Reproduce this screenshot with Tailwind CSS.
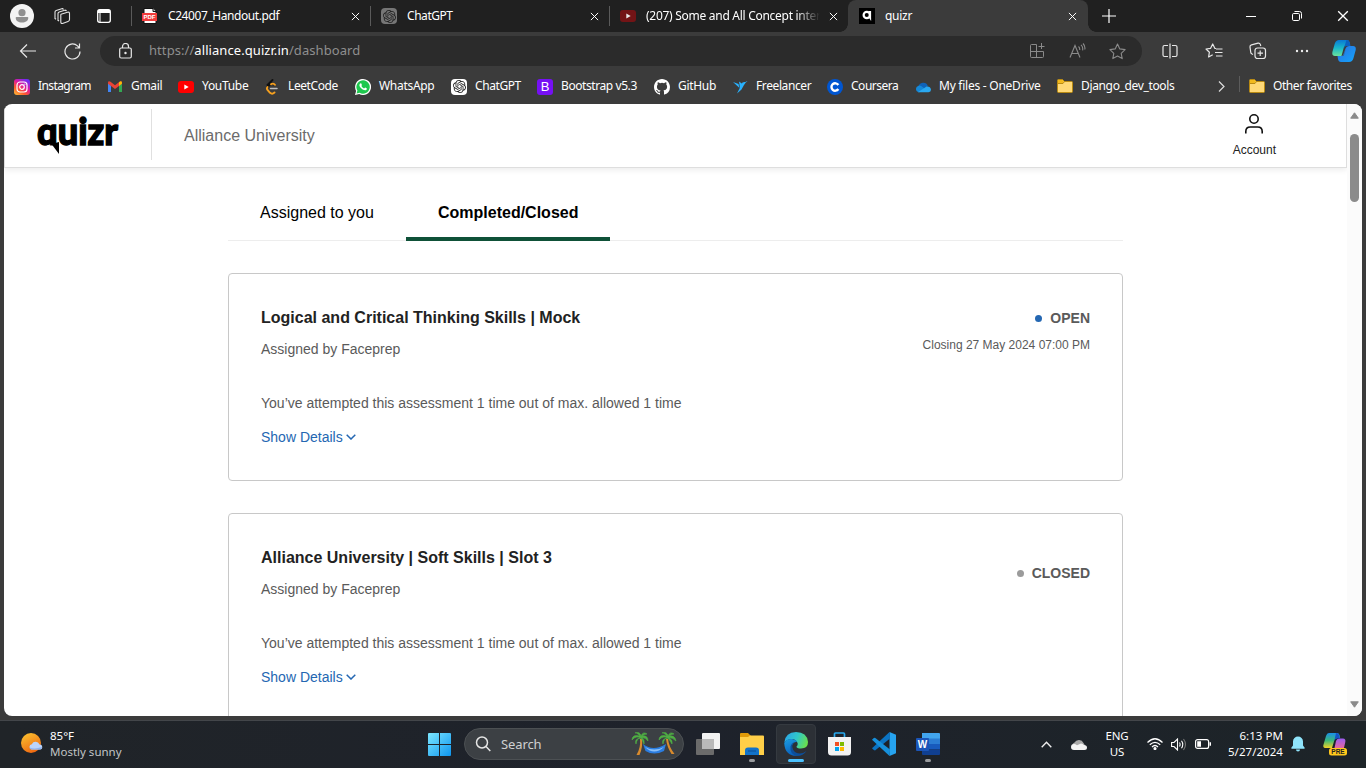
<!DOCTYPE html>
<html lang="en">
<head>
<meta charset="utf-8">
<title>quizr</title>
<script src="https://cdn.jsdelivr.net/npm/@tailwindcss/browser@4"></script>
</head>
<body class="w-[1366px] h-[768px] overflow-hidden bg-[#3b3b3b] flex flex-col font-['Noto_Sans','Open_Sans',sans-serif] text-white">
<svg class="hidden">
  <symbol id="x" viewBox="0 0 10 10"><path d="M1 1l8 8M9 1l-8 8" fill="none" stroke="currentColor" stroke-width="1.1"/></symbol>
  <symbol id="folder" viewBox="0 0 16 16"><path d="M.5 2.5Q.5 1.5 1.5 1.5H5.5L7.5 3.5H14.500Q15.500 3.500 15.500 4.500V13.500Q15.500 14.500 14.500 14.500H1.500Q.5 14.500 .5 13.500Z" fill="#ffd977" stroke="#b98a12"/><path d="M1 2h4.500l1.500 1.700-1.500 1.800H1z" fill="#f2b91d"/><path d="M1 5.500H6L7.500 3.500" fill="none" stroke="#b98a12"/></symbol>
  <symbol id="knot" viewBox="0 0 24 24"><path fill="currentColor" d="M22.282 9.821a5.985 5.985 0 0 0-.516-4.910 6.046 6.046 0 0 0-6.510-2.900A6.065 6.065 0 0 0 4.981 4.182a5.985 5.985 0 0 0-3.998 2.900 6.046 6.046 0 0 0 .743 7.097 5.980 5.980 0 0 0 .510 4.911 6.051 6.051 0 0 0 6.515 2.900A5.985 5.985 0 0 0 13.260 24a6.056 6.056 0 0 0 5.772-4.206 5.990 5.990 0 0 0 3.998-2.900 6.056 6.056 0 0 0-.747-7.073zM13.260 22.430a4.476 4.476 0 0 1-2.876-1.041l.141-.081 4.779-2.758a.795.795 0 0 0 .392-.681v-6.737l2.020 1.169a.071.071 0 0 1 .038.052v5.583a4.504 4.504 0 0 1-4.494 4.494zM3.600 18.304a4.471 4.471 0 0 1-.535-3.014l.142.085 4.783 2.759a.771.771 0 0 0 .781 0l5.843-3.369v2.332a.080.080 0 0 1-.033.062L9.740 19.950a4.499 4.499 0 0 1-6.140-1.646zM2.341 7.896a4.485 4.485 0 0 1 2.366-1.973V11.600a.766.766 0 0 0 .388.677l5.815 3.354-2.020 1.169a.076.076 0 0 1-.071 0l-4.830-2.787A4.504 4.504 0 0 1 2.340 7.872zm16.597 3.855l-5.833-3.387L15.119 7.200a.076.076 0 0 1 .071 0l4.830 2.791a4.494 4.494 0 0 1-.676 8.105v-5.678a.790.790 0 0 0-.407-.667zm2.010-3.023l-.141-.085-4.774-2.782a.776.776 0 0 0-.785 0L9.409 9.230V6.897a.066.066 0 0 1 .028-.061l4.830-2.787a4.499 4.499 0 0 1 6.680 4.660zm-12.640 4.135l-2.020-1.164a.080.080 0 0 1-.038-.057V6.075a4.499 4.499 0 0 1 7.375-3.453l-.142.080L8.704 5.460a.795.795 0 0 0-.393.681zm1.097-2.365l2.602-1.500 2.607 1.500v2.999l-2.597 1.500-2.607-1.500z"/></symbol>
  <symbol id="yt" viewBox="0 0 16 12"><rect width="16" height="12" rx="3" fill="currentColor"/><path d="M6.300 3.500l4.400 2.500-4.400 2.500z" fill="#fff"/></symbol>
</svg>

<!-- tab strip -->
<div class="h-8 shrink-0 bg-[#202020] flex items-center text-[12px] tracking-[-0.28px]">
  <div class="w-[131px] flex items-center pl-[10px]">
    <svg class="size-6" viewBox="0 0 24 24"><circle cx="12" cy="12" r="12" fill="#f3f3f3"/><circle cx="12" cy="8.700" r="3.600" fill="#8f8f8f"/><path d="M6.500 13h11a.8.8 0 0 1 .8.800c0 3.200-2.700 4.700-6.300 4.700s-6.300-1.500-6.300-4.700a.8.800 0 0 1 .8-.8z" fill="#8f8f8f"/></svg>
    <svg class="size-[18px] ml-[19px]" viewBox="0 0 18 18" fill="none" stroke="#e4e4e4" stroke-width="1.100" stroke-linejoin="round"><path d="M8 7.200L14.500 5.200Q16.500 4.800 16.500 6.500V12.500Q16.500 14 15 14.500L9.500 16.500Q7.800 16.800 7.800 15V8zM5 14V6.500Q5 5.300 6.200 4.900L12.500 2.900M2 12V5Q2 3.800 3.200 3.400L9.500 1.400M5 13.200l1 .8M2 11.500l1 .8M12.500 3l1 1M9.500 1.500l1 1"/></svg>
    <svg class="size-4 ml-[25px]" viewBox="0 0 16 16"><rect x="1.700" y="1.700" width="12.600" height="12.600" rx="2" fill="none" stroke="#fff" stroke-width="1.300"/><path d="M2 2h12v3H4.500V14H3.500V5H2z" fill="#fff"/></svg>
  </div>
  <i class="w-px h-5 bg-[#5a5a5a]"></i>
  <div class="w-[238px] flex items-center pl-[10px] pr-[10px]">
    <svg class="size-4" viewBox="0 0 16 16"><path d="M2 .5h9l3 3V15.500H2z" fill="#fff" stroke="#111"/><path d="M11 .5v3h3" fill="#ccc" stroke="#111"/><rect y="5" width="15" height="8" fill="#f23b3b"/><text x="7.500" y="11.300" font-size="6" font-weight="800" fill="#fff" text-anchor="middle" letter-spacing="0" font-family="Liberation Sans">PDF</text></svg>
    <span class="ml-[10px] flex-1 whitespace-nowrap tracking-[-0.42px]">C24007_Handout.pdf</span><svg class="size-[9px]"><use href="#x"/></svg>
  </div>
  <i class="w-px h-5 bg-[#5a5a5a]"></i>
  <div class="w-[238px] flex items-center pl-[10px] pr-[10px]">
    <span class="size-4 rounded-sm bg-[#767676] text-[#222] flex items-center justify-center"><svg class="size-[13px]"><use href="#knot"/></svg></span>
    <span class="ml-[10px] flex-1 tracking-[-0.45px]">ChatGPT</span><svg class="size-[9px]"><use href="#x"/></svg>
  </div>
  <i class="w-px h-5 bg-[#5a5a5a]"></i>
  <div class="w-[238px] flex items-center pl-[10px] pr-[9px]">
    <svg class="w-4 h-3 text-[#7d1315] shrink-0 opacity-90"><use href="#yt"/></svg>
    <span class="ml-[10px] w-[174px] mr-[9px] overflow-hidden whitespace-nowrap [mask-image:linear-gradient(to_right,#000_86%,transparent)]">(207) Some and All Concept inter</span><svg class="size-[9px] shrink-0"><use href="#x"/></svg>
  </div>
  <div class="w-[240px] h-8 bg-[#3b3b3b] rounded-t-lg flex items-center pl-[11px] pr-[11px] relative">
    <i class="absolute -left-2 bottom-0 size-2 bg-[radial-gradient(circle_at_0_0,#202020_7.500px,#3b3b3b_8px)]"></i>
    <i class="absolute -right-2 bottom-0 size-2 bg-[radial-gradient(circle_at_100%_0,#202020_7.500px,#3b3b3b_8px)]"></i>
    <svg class="size-4" viewBox="0 0 16 16"><rect width="16" height="16" fill="#000"/><circle cx="7.800" cy="7" r="3.200" fill="none" stroke="#fff" stroke-width="2.200"/><path d="M9.800 3h2.300v10l-2.300-3.500z" fill="#fff"/></svg>
    <span class="ml-[10px] flex-1">quizr</span><svg class="size-[9px]"><use href="#x"/></svg>
  </div>
  <svg class="size-[14px] ml-[14px]" viewBox="0 0 14 14"><path d="M7 0v14M0 7h14" stroke="#fff" stroke-width="1.200"/></svg>
  <svg class="w-[10px] h-[10px] ml-[130px]" viewBox="0 0 10 10"><path d="M0 5.500h10" stroke="#fff"/></svg>
  <svg class="size-[10px] ml-[36px]" viewBox="0 0 10 10" fill="none" stroke="#fff"><rect x=".5" y="2.500" width="7" height="7" rx="1.200"/><path d="M2.500 .5H7.500a2 2 0 0 1 2 2v5"/></svg>
  <svg class="size-[12px] ml-[35px]"><use href="#x"/></svg>
</div>

<!-- toolbar -->
<div class="h-[38px] shrink-0 flex items-center text-[#e8e8e8]">
  <svg class="w-[17px] h-[14px] ml-[19px]" viewBox="0 0 17 14" fill="none" stroke="currentColor" stroke-width="1.200"><path d="M17 7H1.500M8 .5L1.500 7 8 13.500"/></svg>
  <svg class="size-[17px] ml-[28px]" viewBox="0 0 17 17" fill="none" stroke="currentColor" stroke-width="1.200"><path d="M16 8.500a7.500 7.500 0 1 1-2.500-5.600L15.500 5M15.500 .5V5H11"/></svg>
  <div class="ml-[19px] w-[1042px] h-[30px] rounded-full bg-[#2b2b2b] flex items-center pl-[19px] pr-4">
    <svg class="w-[13px] h-4" viewBox="0 0 13 16" fill="none" stroke="#e8e8e8" stroke-width="1.200"><rect x=".7" y="5" width="11.600" height="10" rx="1.500"/><path d="M3.500 5V3.500a3 3 0 0 1 6 0V5"/><circle cx="6.500" cy="10" r=".6" fill="#fff"/></svg>
    <span class="ml-[17px] flex-1 text-[13px] text-[#8f8f8f] tracking-[0.07px]">https://<span class="text-white">alliance.quizr.in</span>/dashboard</span>
    <svg class="size-4" viewBox="0 0 16 16" fill="none" stroke="#8a8a8a"><path d="M7.500 1.500H2.500a1 1 0 0 0-1 1V13.500a1 1 0 0 0 1 1H13.500a1 1 0 0 0 1-1V8.500M1.500 8.500h13M7.500 1.500v13M12.500 0v6M9.500 3.500h6"/></svg>
    <svg class="w-[17px] h-4 ml-6" viewBox="0 0 17 16" fill="none" stroke="#8a8a8a" stroke-width="1.100"><path d="M1 14.500L6 2.500l5 12M2.800 10.500h6.400M9.500 3.500q1.500 1.200 1.200 3.500M12 1.800q2.300 2 1.600 5.500M14 .5q2.500 2.500 1.800 6"/></svg>
    <svg class="size-[17px] ml-[23px]" viewBox="0 0 17 17" fill="none" stroke="#8a8a8a" stroke-width="1.100" stroke-linejoin="round"><path d="M8.500 1l2.300 4.900 5.300.7-3.900 3.700 1 5.300-4.700-2.600-4.700 2.600 1-5.300L.9 6.600l5.300-.7z"/></svg>
  </div>
  <svg class="size-4 ml-[20px]" viewBox="0 0 16 16" fill="none" stroke="currentColor" stroke-width="1.200"><path d="M6 2.500H2.500a1.500 1.500 0 0 0-1.500 1.500v8a1.500 1.500 0 0 0 1.500 1.500H6M10 2.500h3.500a1.500 1.500 0 0 1 1.500 1.500v8a1.500 1.500 0 0 1-1.500 1.500H10M8 .5v15"/></svg>
  <svg class="w-[18px] h-4 ml-[27px]" viewBox="0 0 18 16" fill="none" stroke="currentColor" stroke-width="1.200" stroke-linejoin="round"><path d="M11 5.500L9.800 5.300 7.700 1 5.600 5.300 1 6l3.400 3.200-.8 4.800 4.100-2.300M11 6h6.500M10 9.500h7.500M11 13h6.500"/></svg>
  <svg class="size-[18px] ml-[26px]" viewBox="0 0 18 18" fill="none" stroke="currentColor" stroke-width="1.200"><rect x="6" y="6" width="10.500" height="10.500" rx="2.500"/><path d="M11.200 8.500v5.500M8.500 11.200h5.500M4 12.500L3 12a2 2 0 0 1-1.300-2L1 5a2 2 0 0 1 1.500-2.200L9 1.200a2 2 0 0 1 2.300 1.200l.5 1.600"/></svg>
  <svg class="w-[14px] h-1 ml-[28px]" viewBox="0 0 14 4" fill="#eee"><circle cx="2" cy="2" r="1.200"/><circle cx="7" cy="2" r="1.200"/><circle cx="12" cy="2" r="1.200"/></svg>
  <svg class="w-6 h-[22px] ml-[23px]" viewBox="0 0 24 22"><defs><linearGradient id="ca" x1="0" y1="0" x2="0" y2="1"><stop stop-color="#0a78d4"/><stop offset=".5" stop-color="#19b7c9"/><stop offset="1" stop-color="#6be39c"/></linearGradient><linearGradient id="cb" x1="0" y1="0" x2="1" y2="1"><stop stop-color="#2d6fe0"/><stop offset="1" stop-color="#12a5fb"/></linearGradient></defs><path d="M7 0h8q2 0 2.500 2l.7 3H15q-2.500 0-3.200 2.500L9.500 16H3Q-.3 16 .4 12L2.800 3.500Q4 0 7 0z" fill="url(#ca)"/><path d="M17 6h4q3.300 0 2.700 4L21.500 18Q20.500 22 17 22H9q-2.500 0-3-3l-.5-3H9q2 0 2.700-2.500L13.500 8.500Q14.200 6 17 6z" fill="url(#cb)"/><path d="M14.500 0q2.500 0 3 2l1 4h-4q-2 0-2.600 2.500L11 11z" fill="#0b5fc0"/><path d="M14 8.500L11.800 16H5.500H9q2 0 2.700-2.500z" fill="#3b3b3b" opacity=".4"/></svg>
</div>

<!-- favorites bar -->
<div class="h-[34px] shrink-0 flex items-center pl-[14px] pb-[2px] text-[12px] leading-4 tracking-[-0.3px] whitespace-nowrap">
  <div class="w-[93px] flex items-center gap-2 shrink-0 tracking-[-0.6px]"><svg class="size-4 shrink-0 mt-px" viewBox="0 0 16 16"><defs><linearGradient id="ig" x1="0" y1="1" x2=".7" y2="0"><stop stop-color="#ffc83a"/><stop offset=".35" stop-color="#ff5a2c"/><stop offset=".65" stop-color="#e0199e"/><stop offset="1" stop-color="#6f2cf5"/></linearGradient></defs><rect width="16" height="16" rx="3" fill="url(#ig)"/><rect x="3" y="3" width="10" height="10" rx="3" fill="none" stroke="#fff" stroke-width="1.200"/><circle cx="8" cy="8" r="2.300" fill="none" stroke="#fff" stroke-width="1.200"/><circle cx="10.900" cy="5.100" r=".7" fill="#fff"/></svg>Instagram</div>
  <div class="w-[71px] flex items-center gap-2 shrink-0"><svg class="size-4 shrink-0 mt-px" viewBox="0 0 16 16"><path d="M1 4v9h3V6.500z" fill="#4285f4"/><path d="M12 6.500V13h3V4z" fill="#34a853"/><path d="M1 3.800Q1.200 1.500 3.500 2.800L8 6.300l4.500-3.500Q14.800 1.500 15 3.800v1L8 10 1 4.800z" fill="#ea4335"/><path d="M12 3.200Q15 1 15 4.500L12 7z" fill="#fbbc04"/></svg>Gmail</div>
  <div class="w-[86px] flex items-center gap-2 shrink-0"><svg class="w-4 h-3 shrink-0 text-[#f00] mt-px"><use href="#yt"/></svg>YouTube</div>
  <div class="w-[91px] flex items-center gap-2 shrink-0 tracking-[-0.4px]"><svg class="size-4 shrink-0 mt-px" viewBox="0 0 16 16" fill="none" stroke-width="1.900" stroke-linecap="round"><path d="M8.500 1L3.500 6" stroke="#111"/><path d="M10.500 5.800Q8.500 3.800 6.500 5L3.500 8" stroke="#111"/><path d="M11 5.800Q9 3.800 7 5.200" stroke="#f5a01f"/><path d="M3.500 8Q2.300 9.500 3.500 11L6 13.800Q8.200 15.700 10.500 13.500" stroke="#f5a01f"/><path d="M6.500 9.500h6.500" stroke="#bdbdbd" stroke-width="1.500"/></svg>LeetCode</div>
  <div class="w-[96px] flex items-center gap-2 shrink-0"><svg class="size-4 shrink-0 mt-px" viewBox="0 0 16 16"><path d="M0 16l1.100-4.100A8 8 0 1 1 4.200 15z" fill="#fff"/><path d="M1.600 14.400l.8-2.800a6.700 6.700 0 1 1 2.300 2.200z" fill="#1ec84e"/><path d="M5.800 4.200c.3 0 .4.100.6.500l.5 1.200c.1.300-.6.900-.5 1.200.7 1.200 1.500 1.800 2.700 2.300.3.100.8-.9 1.100-.8l1.400.7c.5.300.1 1.500-.5 1.800-2.300 1.100-6.400-2.300-6.700-4.500-.1-1.300.6-2.300 1.400-2.400z" fill="#fff"/></svg>WhatsApp</div>
  <div class="w-[86px] flex items-center gap-2 shrink-0 tracking-[-0.42px]"><span class="size-4 shrink-0 mt-px rounded-sm bg-white text-[#222] flex items-center justify-center"><svg class="size-[13px]"><use href="#knot"/></svg></span>ChatGPT</div>
  <div class="w-[117px] flex items-center gap-2 shrink-0 tracking-[-0.42px]"><span class="size-4 shrink-0 mt-px rounded-[3px] bg-[#7610f4] font-['Liberation_Sans'] text-[13px] leading-4 text-center tracking-normal">B</span>Bootstrap v5.3</div>
  <div class="w-[78px] flex items-center gap-2 shrink-0"><svg class="size-4 shrink-0 mt-px" viewBox="0 0 16 16" fill="#fff"><path d="M8 0C3.580 0 0 3.580 0 8c0 3.540 2.290 6.530 5.470 7.590.4.070.55-.17.55-.38 0-.19-.01-.82-.01-1.490-2.010.37-2.530-.49-2.690-.94-.09-.23-.48-.94-.82-1.130-.28-.15-.68-.52-.01-.53.63-.01 1.080.58 1.230.82.720 1.210 1.870.87 2.330.66.070-.52.280-.87.510-1.070-1.780-.2-3.640-.89-3.640-3.950 0-.87.310-1.590.820-2.150-.08-.2-.36-1.020.080-2.120 0 0 .67-.21 2.200.82a7.600 7.600 0 0 1 4 0c1.530-1.040 2.200-.82 2.200-.82.440 1.100.160 1.920.080 2.120.510.560.820 1.270.820 2.150 0 3.070-1.870 3.750-3.650 3.950.290.250.540.730.540 1.480 0 1.070-.01 1.930-.01 2.200 0 .21.150.46.550.38A8.010 8.010 0 0 0 16 8c0-4.420-3.580-8-8-8z"/></svg>GitHub</div>
  <div class="w-[95px] flex items-center gap-2 shrink-0 tracking-[-0.4px]"><svg class="size-4 shrink-0 mt-px" viewBox="0 0 16 16" fill="#29b2fe"><path d="M1 3l5.500 2 1 4z M7 2.500L10.500 5 8 9z M10.500 3.500L14.500 2.500 12 6 9.500 10.500 5 14.500 7 10.500z M13.500 2.500h2l-1 .8z"/></svg>Freelancer</div>
  <div class="w-[88px] flex items-center gap-2 shrink-0 tracking-[-0.48px]"><svg class="size-4 shrink-0 mt-px" viewBox="0 0 16 16"><circle cx="8" cy="8" r="8" fill="#0056d2"/><path d="M11.300 6A3.700 3.700 0 1 0 11.300 10" fill="none" stroke="#fff" stroke-width="2.400"/></svg>Coursera</div>
  <div class="w-[142px] flex items-center gap-2 shrink-0 tracking-[-0.25px]"><svg class="size-4 shrink-0 mt-px" viewBox="0 0 16 16"><path d="M3.500 8a4.800 4.800 0 0 1 9.300-1L8 11z" fill="#0f62b8"/><path d="M3.500 13.300a3.400 3.400 0 0 1 0-6.600q1.700-.4 3 .6L13 12z" fill="#1488d8"/><path d="M3 13.300L11.500 7.500q3.800-.5 4.500 3 0 2.500-2.500 2.800z" fill="#2aa8f0"/></svg>My files - OneDrive</div>
  <div class="w-[160px] flex items-center gap-2 shrink-0 tracking-[-0.35px]"><svg class="size-4 shrink-0"><use href="#folder"/></svg>Django_dev_tools</div>
  <svg class="w-[7px] h-[11px] ml-px shrink-0" viewBox="0 0 7 11"><path d="M1 .5l5 5-5 5" fill="none" stroke="#ddd" stroke-width="1.200"/></svg>
  <i class="w-px h-4 ml-[14px] bg-[#5c5c5c] shrink-0 -mt-1"></i>
  <div class="ml-[9px] flex items-center gap-2 shrink-0 tracking-[-0.42px]"><svg class="size-4 shrink-0"><use href="#folder"/></svg>Other favorites</div>
</div>

<!-- page -->
<div class="mx-1 h-[612px] shrink-0 bg-white rounded-lg overflow-hidden flex font-['Liberation_Sans',Arial,sans-serif]">
  <div class="w-[1343px] flex flex-col">
    <header class="h-16 shrink-0 border-x border-b border-[#dedede] shadow-[0_2px_6px_rgba(0,0,0,0.08)] flex items-start">
      <svg class="w-[90px] h-[46px] ml-[32px] mt-[8px] overflow-visible" viewBox="0 0 90 46"><text x="0" y="32.500" font-family="Lato" font-weight="900" font-size="38" textLength="81" lengthAdjust="spacingAndGlyphs" stroke="#000" stroke-width="1.400">quizr</text><path d="M10 33.600H24V44H10z" fill="#fff"/><path d="M14.500 32L22 30V42z"/></svg>
      <i class="w-px h-[51px] mt-[5px] ml-[24px] bg-[#e0e0e0]"></i>
      <span class="ml-[32px] mt-[20px] text-[16px] leading-6 text-[#6b6b6b]">Alliance University</span>
      <div class="ml-auto mr-[70px] mt-2 flex flex-col items-center text-[12px] leading-4 text-[#222]">
        <svg class="w-5 h-6" viewBox="0 0 20 24" fill="none" stroke="#111" stroke-width="1.600"><circle cx="10" cy="7" r="4.200"/><path d="M1.800 21.500v-2q0-4.500 4.500-4.500h7.400q4.500 0 4.500 4.500v2"/></svg>
        <span class="mt-[6px]">Account</span>
      </div>
    </header>
    <main class="ml-[224px] w-[895px]">
      <nav class="mt-[17px] h-14 border-b border-[#ededed] flex text-[16px] leading-6 text-black">
        <span class="w-[178px] pl-8 pt-4">Assigned to you</span>
        <span class="w-[204px] h-14 pl-8 pt-4 font-bold border-b-4 border-[#0f5138]">Completed/Closed</span>
      </nav>
      <section class="mt-8 h-[208px] border border-[#c8c8c8] rounded p-8 flex justify-between text-[14px] text-[#5a5a5a]">
        <div class="leading-5">
          <h2 class="text-[16px] leading-6 font-bold text-[#222]">Logical and Critical Thinking Skills | Mock</h2>
          <p class="mt-[9px]">Assigned by Faceprep</p>
          <p class="mt-[34px]">You’ve attempted this assessment 1 time out of max. allowed 1 time</p>
          <a class="mt-[14px] flex items-center gap-[3px] text-[#2467b2]">Show Details<svg class="w-[10px] h-[6px]" viewBox="0 0 10 6"><path d="M.7 .7L5 5 9.300 .7" fill="none" stroke="currentColor" stroke-width="1.500"/></svg></a>
        </div>
        <div class="flex flex-col items-end leading-5 pt-[2px]">
          <b class="flex items-center gap-2"><i class="size-[7px] rounded-full bg-[#2467b2]"></i>OPEN</b>
          <span class="mt-[7px] text-[12px]">Closing 27 May 2024 07:00 PM</span>
        </div>
      </section>
      <section class="mt-8 h-[208px] border border-[#c8c8c8] rounded p-8 flex justify-between text-[14px] text-[#5a5a5a]">
        <div class="leading-5">
          <h2 class="text-[16px] leading-6 font-bold text-[#222]">Alliance University | Soft Skills | Slot 3</h2>
          <p class="mt-[9px]">Assigned by Faceprep</p>
          <p class="mt-[34px]">You’ve attempted this assessment 1 time out of max. allowed 1 time</p>
          <a class="mt-[14px] flex items-center gap-[3px] text-[#2467b2]">Show Details<svg class="w-[10px] h-[6px]" viewBox="0 0 10 6"><path d="M.7 .7L5 5 9.300 .7" fill="none" stroke="currentColor" stroke-width="1.500"/></svg></a>
        </div>
        <div class="leading-5 pt-[17px]">
          <b class="flex items-center gap-2"><i class="size-[7px] rounded-full bg-[#9b9b9b]"></i>CLOSED</b>
        </div>
      </section>
    </main>
  </div>
  <!-- scrollbar -->
  <div class="flex-1 bg-[#fbfbfb] flex flex-col items-center">
    <svg class="w-[9px] h-[7px] mt-2" viewBox="0 0 9 7"><path d="M4.500 .8L8.300 6.200H.7z" fill="#8b8b8b" stroke="#8b8b8b" stroke-linejoin="round"/></svg>
    <i class="mt-[15px] w-[9px] h-[68px] rounded-full bg-[#8b8b8b]"></i>
    <svg class="w-[9px] h-[7px] mt-auto mb-2" viewBox="0 0 9 7"><path d="M4.500 6.200L8.300 .8H.7z" fill="#8b8b8b" stroke="#8b8b8b" stroke-linejoin="round"/></svg>
  </div>
</div>

<!-- taskbar -->
<div class="mt-1 h-12 shrink-0 border-t border-[#43464a] bg-linear-to-r from-[#202428] via-[#1e222b] to-[#1d2428] flex items-center text-[11.500px] leading-4 pb-px">
  <svg class="w-[23px] h-[22px] ml-[20px] -mt-0.5" viewBox="0 0 23 22"><defs><linearGradient id="su" x1=".2" y1="0" x2=".7" y2="1"><stop stop-color="#fbc02f"/><stop offset="1" stop-color="#ee6410"/></linearGradient></defs><circle cx="11" cy="11" r="10" fill="url(#su)"/><path d="M11.500 17.500a2.700 2.700 0 0 1 .3-5.300 4.200 4.200 0 0 1 7.700.3 2.500 2.500 0 0 1 .5 5z" fill="#bcd4fa"/><path d="M9.500 15.500q5 2 12.500-.5-.5 2.500-2 2.500h-8.500q-1.500 0-2-2z" fill="#8db3f0"/></svg>
  <div class="ml-[7px] w-[378px] mb-px"><div>85°F</div><div class="text-[#c2c4c6]">Mostly sunny</div></div>
  <svg class="size-[23px]" viewBox="0 0 23 23"><defs><linearGradient id="wi" x1="0" y1="0" x2="1" y2="1"><stop stop-color="#7ce6ff"/><stop offset="1" stop-color="#0e96ef"/></linearGradient></defs><path d="M0 1q0-1 1-1h10v11H0zM12 0h10q1 0 1 1v10H12zM0 12h11v11H1q-1 0-1-1zM12 12h11v10q0 1-1 1H12z" fill="url(#wi)"/></svg>
  <div class="ml-[13px] w-[220px] h-8 rounded-full bg-[#3c4044] border border-[#4c5053] flex items-center pl-[10px] pr-[6px]">
    <svg class="size-[16px]" viewBox="0 0 16 16" fill="none" stroke="#e5e5e5" stroke-width="1.500"><circle cx="7" cy="6.500" r="5.500"/><path d="M11 10.500l4.300 4.500"/></svg>
    <span class="ml-[10px] flex-1 text-[13px] tracking-[-0.1px] text-[#cfd0d1] mb-px">Search</span>
    <svg class="w-[46px] h-6" viewBox="0 0 46 24"><path d="M9 7Q10 15 5.500 23h3Q12 15 11 7zM35 7Q36 15 40.500 22h3Q38 15 37 7z" fill="#d98b2d"/><path d="M12 12Q22 20 35 12L33 19Q23 24 14.500 19z" fill="#2b7de0"/><path d="M14 15Q23 20 33 15Q23 24 14 15z" fill="#8ac0fa"/><path d="M9.500 6Q5 3 1 8 1 2 9 4 5 0 4 1 9-1 10 4 12-1 16 2 13 2 11 4 17 3 17 9 14 5 11 6 14 8 13 12 11 7 9.500 6 6 6 5 12 3 7 9.500 6zM36.500 6Q32 3 28 8 28 2 36 4 32 0 31 1 36-1 37 4 39-1 43 2 40 2 38 4 44 3 45 9 41 5 38 6 42 8 41 12 38 7 36.500 6 33 6 32 12 30 7 36.500 6z" fill="#4fae43" stroke="#4fae43" stroke-width=".6"/></svg>
  </div>
  <svg class="w-6 h-[22px] ml-[12px]" viewBox="0 0 24 22"><rect x="6" width="18" height="16" rx="1" fill="#f2f2f2"/><rect y="6" width="18" height="16" rx="1" fill="#6b6b6b"/><path d="M6 6h12v10H6z" fill="#b9b9b9"/></svg>
  <div class="ml-5 w-6 h-10 flex flex-col items-center justify-between pt-[9px] pb-[2px]"><svg class="w-6 h-[22px]" viewBox="0 0 24 22"><path d="M0 1q0-1 1-1h7l3 3v5H0z" fill="#e09a08"/><path d="M0 4h8l2-1.500h13q1 0 1 1V22H0z" fill="#ffcf48"/><path d="M5 22v-4.500q0-3 3-3h8q3 0 3 3V22z" fill="#1273c9"/><path d="M8 18h8" stroke="#0a4f95"/></svg><i class="w-[6px] h-[3px] rounded-full bg-[#9a9c9f]"></i></div>
  <div class="ml-3 w-10 h-10 rounded bg-[#2c3036] border border-[#353a40] flex flex-col items-center justify-between pt-[7px] pb-px"><svg class="size-6 shrink-0" viewBox="0 0 24 24"><defs><linearGradient id="e1" x1="0" y1=".3" x2="1" y2=".6"><stop stop-color="#2aa5e8"/><stop offset=".5" stop-color="#30c8c8"/><stop offset="1" stop-color="#6be04a"/></linearGradient><linearGradient id="e2" x1="0" y1="0" x2=".3" y2="1"><stop stop-color="#1b9de2"/><stop offset="1" stop-color="#0a62bd"/></linearGradient></defs><path d="M.3 10.500Q1.500 0 12 0q11 0 12 10 0 6.500-7 6.500-4.500 0-4.500-2 1.500-1 1.200-3Q12.500 7 7.500 7 3 7 .3 10.500z" fill="url(#e1)"/><path d="M.2 11Q2.500 6.500 8 7q4 .5 5.200 3-4-.5-5.200 3.500-1 6 5.500 10.300Q1 24.500 .2 11z" fill="url(#e2)"/><path d="M10.500 10.300q-3.500 2-1.500 7.200 2 4 7 4 3 0 6.500-2.500Q19 24 13 24 5.500 22 6.500 14.500q1-3.500 4-4.200z" fill="#0c4f9c"/></svg><i class="w-4 h-[3px] rounded-full bg-[#4cc2ff]"></i></div>
  <svg class="w-[23px] h-6 ml-3" viewBox="0 0 23 24"><path d="M6.500 6V2Q6.500 1 7.500 1h8q1 0 1 1v4" fill="none" stroke="#27a9ee" stroke-width="1.700"/><path d="M0 5h23v15q0 3.500-3.500 3.500h-16Q0 23.500 0 20z" fill="#f2f2f2"/><path fill="#f25022" d="M7 10h4v4H7z"/><path fill="#7fba00" d="M12 10h4v4h-4z"/><path fill="#00a4ef" d="M7 15h4v4H7z"/><path fill="#ffb900" d="M12 15h4v4h-4z"/></svg>
  <svg class="size-6 ml-[21px]" viewBox="0 0 24 24"><path d="M17.500 0L24 2.800V21.200L17.500 24z" fill="#26a3ef"/><path d="M17.500 0L18 6.500 3 18.500 1.800 18 0 16.200z" fill="#0b74c4"/><path d="M0 7.800L1.800 6 3 5.700 18 17.500 17.500 24z" fill="#1690dc"/></svg>
  <div class="ml-5 w-6 h-10 flex flex-col items-center justify-between pt-[9px] pb-[2px]"><svg class="w-6 h-[22px]" viewBox="0 0 24 22"><path d="M6 0h17q1 0 1 1v5H6z" fill="#42a5ee"/><path d="M6 5.500h18V11H6z" fill="#2b7cd3"/><path d="M6 11h18v5.500H6z" fill="#185abd"/><path d="M6 16.500h18V21q0 1-1 1H7q-1 0-1-1z" fill="#103f91"/><rect y="5" width="13" height="13" rx="1" fill="#1b55b8"/><text x="6.500" y="15" text-anchor="middle" font-size="10" font-weight="700" fill="#fff" font-family="Liberation Sans">W</text></svg><i class="w-[6px] h-[3px] rounded-full bg-[#9a9c9f]"></i></div>
  <svg class="w-[11px] h-[7px] ml-[101px]" viewBox="0 0 11 7"><path d="M.7 6.300L5.500 1.300l4.800 5" fill="none" stroke="#eee" stroke-width="1.400"/></svg>
  <svg class="w-4 h-[11px] ml-[19px]" viewBox="0 0 16 11"><path d="M3 9a3 3 0 0 1 .5-5.500 5 5 0 0 1 9 .5L15 8z" fill="#a9a9a9"/><path d="M3 11a3 3 0 0 1 0-6q1.500 0 3 1.200L10 4.500q2 0 2.800 1.500Q16 6 16 8.500 16 11 13.500 11z" fill="#f4f4f4"/></svg>
  <div class="w-[60px] text-center tracking-[-0.1px]">ENG<br>US</div>
  <svg class="w-4 h-3" viewBox="0 0 16 12" fill="none" stroke="#fff" stroke-width="1.200"><path d="M.5 4.500Q8-3 15.500 4.500M2.800 6.800Q8 1.800 13.200 6.800M5 9Q8 6 11 9"/><circle cx="8" cy="10.500" r="1" fill="#fff"/></svg>
  <svg class="w-4 h-[13px] ml-2" viewBox="0 0 16 13" fill="none" stroke="#fff" stroke-width="1.100"><path d="M.6 4.500h2.400L6.500 1v11L3 8.500H.6zM8.500 4.500q1.200 2 0 4M10.500 2.800q2.500 3.700 0 7.400"/><path d="M12.500 1q4 5.500 0 11" stroke="#777"/></svg>
  <svg class="w-4 h-[10px] ml-2" viewBox="0 0 16 10"><rect x=".6" y=".6" width="13" height="8.800" rx="2" fill="none" stroke="#fff" stroke-width="1.200"/><path d="M2.200 2.300h3.800v5.400H2.200zM14.500 3.300H16v3.400h-1.500z" fill="#fff"/></svg>
  <div class="w-[72px] text-right tracking-[0.05px] mb-px">6:13 PM<br>5/27/2024</div>
  <svg class="w-[14px] h-4 ml-2" viewBox="0 0 14 16" fill="#8fe4fb"><path d="M7 .5a5 5 0 0 1 5 5V9.500l1.700 2.300q.2.900-.6.900H.9q-.8 0-.6-.9L2 9.500V5.500a5 5 0 0 1 5-5zM5 13.500h4a2 2 0 0 1-4 0z"/></svg>
  <svg class="w-6 h-6 ml-[18px]" viewBox="0 0 24 24"><defs><linearGradient id="pa" x1="0" y1="0" x2="0" y2="1"><stop stop-color="#1a8fe8"/><stop offset=".5" stop-color="#3bb878"/><stop offset="1" stop-color="#f2d225"/></linearGradient><linearGradient id="pb" x1="0" y1="0" x2="0" y2="1"><stop stop-color="#9b5cf0"/><stop offset="1" stop-color="#f56a8d"/></linearGradient></defs><path d="M6 1h8q2 0 2.500 2l.7 3H14q-2 0-2.700 2.500L9 16H3Q-.3 16 .4 13L3 4Q3.800 1 6 1z" fill="url(#pa)"/><path d="M16 6.500h4q3 0 2.300 3.500L20.500 18H8.500q2.500 0 3-2l1.500-7q.8-2.500 3-2.500z" fill="url(#pb)"/><path d="M13 1q2.500 0 3 2l1 3.500h-3q-2 0-2.700 2.500z" fill="#1552c8"/><rect x="6" y="16" width="18" height="7.500" rx="2.500" fill="#ffc81c"/><text x="15" y="22.200" text-anchor="middle" font-size="6.500" font-weight="800" fill="#222" font-family="Liberation Sans">PRE</text></svg>
</div>
</body>
</html>
